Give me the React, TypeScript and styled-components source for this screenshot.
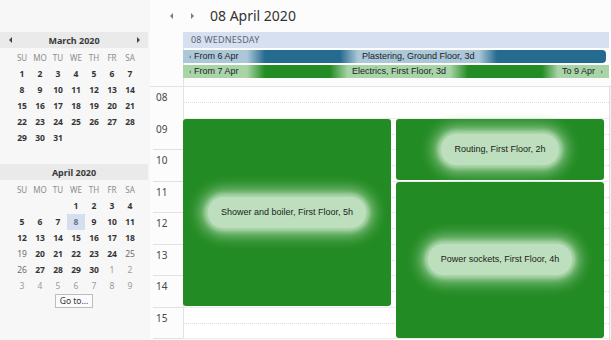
import React from 'react';
import styled, { createGlobalStyle } from 'styled-components';

const UI = `"Noto Sans", "Open Sans", sans-serif`;
const EV = `"Liberation Sans", Arial, sans-serif`;

const Global = createGlobalStyle`
  html, body { margin: 0; padding: 0; background: #fcfcfc; }
  body { width: 611px; height: 340px; overflow: hidden; }
  *, *::before, *::after { box-sizing: border-box; }
`;

const Root = styled.div`
  display: flex;
  width: 611px;
  height: 340px;
  overflow: hidden;
  font-family: ${UI};
`;

/* ---------- sidebar ---------- */
const Sidebar = styled.aside`
  width: 150px;
  flex: none;
  background: #f6f7f6;
  padding-top: 32px;
  display: flex;
  flex-direction: column;
`;

const MonthBlock = styled.section`
  width: 148px;
  & + & { margin-top: 2px; }
`;

const MonthHeader = styled.div`
  height: 16px;
  display: grid;
  grid-template-columns: 20px 1fr 20px;
  align-items: center;
  background: #e9eae9;
  font-size: 9px;
  font-weight: 700;
  color: #3a3a3a;
  text-align: center;
`;

const Tri = styled.span<{ $dir: 'left' | 'right'; $color?: string; $size?: number }>`
  display: inline-block;
  width: 0;
  height: 0;
  border-top: ${p => p.$size ?? 3}px solid transparent;
  border-bottom: ${p => p.$size ?? 3}px solid transparent;
  ${p => p.$dir === 'left'
    ? `border-right: ${p.$size ?? 3}px solid ${p.$color ?? '#444'};`
    : `border-left: ${p.$size ?? 3}px solid ${p.$color ?? '#444'};`}
  justify-self: center;
`;

const DowRow = styled.div`
  display: grid;
  grid-template-columns: repeat(7, 18px);
  height: 18px;
  padding-left: 13px;
  align-items: center;
  font-size: 8px;
  color: #8c8c8c;
  text-align: center;
`;

const DaysGrid = styled.div`
  display: grid;
  grid-template-columns: repeat(7, 18px);
  grid-auto-rows: 16px;
  padding-left: 13px;
`;

type Kind = 'bold' | 'plain' | 'other' | 'selected' | 'empty';

const DayCell = styled.span<{ $kind: Kind }>`
  display: block;
  text-align: center;
  line-height: 16px;
  font-size: 8.5px;
  font-weight: ${p => (p.$kind === 'bold' || p.$kind === 'selected' ? 700 : 400)};
  color: ${p =>
    p.$kind === 'bold' ? '#343434'
    : p.$kind === 'plain' ? '#6e6e6e'
    : p.$kind === 'selected' ? '#6b7482'
    : '#9c9c9c'};
  background: ${p => (p.$kind === 'selected' ? '#d5dff0' : 'transparent')};
`;

const Footer = styled.div`
  width: 148px;
  display: flex;
  justify-content: center;
`;

const GoTo = styled.button`
  width: 38px;
  height: 14px;
  padding: 0;
  border: 1px solid #bdbdbd;
  background: #fbfbfb;
  font-family: ${UI};
  font-size: 8.5px;
  line-height: 12px;
  color: #333;
`;

/* ---------- main ---------- */
const Main = styled.main`
  flex: 1;
  min-width: 0;
  display: flex;
  flex-direction: column;
  background: #fcfcfc;
`;

const TopBar = styled.header`
  height: 32px;
  flex: none;
  display: flex;
  align-items: center;
  padding-left: 20px;
`;

const NavGap = styled.span<{ $w: number }>`
  display: inline-block;
  width: ${p => p.$w}px;
`;

const Title = styled.h1`
  margin: 0;
  font-size: 14px;
  font-weight: 400;
  line-height: 1;
  color: #333;
`;

const AllDay = styled.div`
  height: 55px;
  flex: none;
  display: grid;
  grid-template-columns: 33px 426px 2px;
  border-bottom: 1px solid #e3e3e3;
`;

const AllDayColumn = styled.div`
  grid-column: 2;
  display: flex;
  flex-direction: column;
  gap: 2px;
  box-shadow: inset 1px 0 #e2e2e2;
`;

const DayHeader = styled.div`
  height: 16px;
  background: #d6e0f1;
  padding-left: 8px;
  font-size: 9px;
  line-height: 16px;
  letter-spacing: 0.2px;
  color: #5b6570;
`;

const Banner = styled.div<{ $color: string; $rounded?: boolean }>`
  height: 13px;
  display: flex;
  align-items: stretch;
  background: ${p => p.$color};
  border-radius: ${p => (p.$rounded ? '0 4px 4px 0' : '0')};
  margin-right: ${p => (p.$rounded ? '3px' : '0')};
  font-family: ${EV};
  font-size: 9px;
  line-height: 13px;
  color: #1b2327;
  white-space: nowrap;
  overflow: hidden;
`;

const TagStart = styled.div<{ $light: string }>`
  width: 82px;
  display: flex;
  align-items: center;
  gap: 3px;
  padding-left: 6px;
  background: linear-gradient(to right, ${p => p.$light} 0, ${p => p.$light} 78%, transparent 100%);
`;

const TagMid = styled.div<{ $light: string; $offset: number }>`
  margin-left: ${p => p.$offset}px;
  padding: 0 22px;
  background: linear-gradient(to right, transparent 0, ${p => p.$light} 18px, ${p => p.$light} calc(100% - 18px), transparent 100%);
`;

const TagEnd = styled.div<{ $light: string }>`
  margin-left: auto;
  display: flex;
  align-items: center;
  gap: 6px;
  padding: 0 6px 0 20px;
  background: linear-gradient(to right, transparent 0, ${p => p.$light} 16px);
`;

const Schedule = styled.div`
  flex: 1;
  display: grid;
  grid-template-columns: 33px 426px 2px;
  align-items: start;
`;

const TimeColumn = styled.div`
  display: flex;
  flex-direction: column;
`;

const TimeSlot = styled.div<{ $line: boolean }>`
  height: 31.5px;
  margin-left: 3px;
  padding: 4px 0 0 3px;
  font-size: 10px;
  line-height: 12px;
  color: #454545;
  border-bottom: 1px solid ${p => (p.$line ? '#e1e1e1' : 'transparent')};
`;

const DayArea = styled.div`
  display: grid;
  grid-template-columns: 1fr 1fr;
  grid-template-rows: repeat(8, 31.5px);
  column-gap: 5px;
  padding-right: 5px;
  background: #fff;
  box-shadow: inset 1px 0 #e2e2e2;
`;

const GridSlot = styled.div<{ $row: number }>`
  grid-column: 1 / -1;
  grid-row: ${p => p.$row};
  margin-right: -5px;
  position: relative;
  border-bottom: 1px solid #ececec;
  &::after {
    content: '';
    position: absolute;
    left: 1px;
    right: 0;
    top: 15px;
    border-top: 1px dotted #dcdcdc;
  }
`;

const ScrollEdge = styled.div`
  align-self: stretch;
  border-left: 1px solid #dedede;
  background: #f4f4f4;
`;

const Event = styled.div<{ $col: number; $rows: string; $gap: number }>`
  grid-column: ${p => p.$col};
  grid-row: ${p => p.$rows};
  margin-bottom: ${p => p.$gap}px;
  background: #238b23;
  border-radius: 3px;
  display: flex;
  align-items: center;
  justify-content: center;
  z-index: 1;
`;

const EventLabel = styled.span`
  padding: 10px 13px;
  border-radius: 20px;
  background: #bddfbd;
  box-shadow: 0 0 4px 3px #b0d8b0, 0 0 14px 8px #8fc68f;
  font-family: ${EV};
  font-size: 9px;
  line-height: 11px;
  color: #1c1c1c;
  white-space: nowrap;
`;

/* ---------- data ---------- */
type Day = { label: string; kind: Kind };

const march: Day[] = [
  ...Array.from({ length: 31 }, (_, i) => ({ label: String(i + 1), kind: 'bold' as Kind })),
  ...Array.from({ length: 11 }, () => ({ label: '', kind: 'empty' as Kind })),
];

const plainApril = [19, 25, 26];
const april: Day[] = [
  ...Array.from({ length: 3 }, () => ({ label: '', kind: 'empty' as Kind })),
  ...Array.from({ length: 30 }, (_, i) => {
    const d = i + 1;
    const kind: Kind = d === 8 ? 'selected' : plainApril.includes(d) ? 'plain' : 'bold';
    return { label: String(d), kind };
  }),
  ...Array.from({ length: 9 }, (_, i) => ({ label: String(i + 1), kind: 'other' as Kind })),
];

const DOW = ['SU', 'MO', 'TU', 'WE', 'TH', 'FR', 'SA'];
const HOURS = ['08', '09', '10', '11', '12', '13', '14', '15'];

const Month: React.FC<{ title: string; arrows?: boolean; days: Day[] }> = ({ title, arrows, days }) => (
  <MonthBlock>
    <MonthHeader>
      {arrows ? <Tri $dir="left" /> : <span />}
      <span>{title}</span>
      {arrows ? <Tri $dir="right" /> : <span />}
    </MonthHeader>
    <DowRow>
      {DOW.map(d => <span key={d}>{d}</span>)}
    </DowRow>
    <DaysGrid>
      {days.map((d, i) => <DayCell key={i} $kind={d.kind}>{d.label}</DayCell>)}
    </DaysGrid>
  </MonthBlock>
);

const PL_BLUE = '#256b8f';
const PL_LIGHT = '#abc7d8';
const EL_GREEN = '#248c24';
const EL_LIGHT = '#a9d4a7';

export default function App() {
  return (
    <Root>
      <Global />
      <Sidebar>
        <Month title="March 2020" arrows days={march} />
        <Month title="April 2020" days={april} />
        <Footer>
          <GoTo type="button">Go to...</GoTo>
        </Footer>
      </Sidebar>
      <Main>
        <TopBar>
          <Tri $dir="left" $color="#7a7a7a" />
          <NavGap $w={18} />
          <Tri $dir="right" $color="#7a7a7a" />
          <NavGap $w={16} />
          <Title>08 April 2020</Title>
        </TopBar>
        <AllDay>
          <AllDayColumn>
            <DayHeader>08 WEDNESDAY</DayHeader>
            <Banner $color={PL_BLUE} $rounded>
              <TagStart $light={PL_LIGHT}>
                <Tri $dir="left" $color="#6d8592" $size={2.5} />
                <span>From 6 Apr</span>
              </TagStart>
              <TagMid $light={PL_LIGHT} $offset={75}>Plastering, Ground Floor, 3d</TagMid>
            </Banner>
            <Banner $color={EL_GREEN}>
              <TagStart $light={EL_LIGHT}>
                <Tri $dir="left" $color="#6f8f6f" $size={2.5} />
                <span>From 7 Apr</span>
              </TagStart>
              <TagMid $light={EL_LIGHT} $offset={65}>Electrics, First Floor, 3d</TagMid>
              <TagEnd $light={EL_LIGHT}>
                <span>To 9 Apr</span>
                <Tri $dir="right" $color="#6f8f6f" $size={2.5} />
              </TagEnd>
            </Banner>
          </AllDayColumn>
        </AllDay>
        <Schedule>
          <TimeColumn>
            {HOURS.map((h, i) => (
              <TimeSlot key={h} $line={i !== 0}>{h}</TimeSlot>
            ))}
          </TimeColumn>
          <DayArea>
            {HOURS.map((h, i) => <GridSlot key={h} $row={i + 1} />)}
            <Event $col={1} $rows="2 / 8" $gap={1.5}>
              <EventLabel>Shower and boiler, First Floor, 5h</EventLabel>
            </Event>
            <Event $col={2} $rows="2 / 4" $gap={1.5}>
              <EventLabel>Routing, First Floor, 2h</EventLabel>
            </Event>
            <Event $col={2} $rows="4 / 9" $gap={1}>
              <EventLabel>Power sockets, First Floor, 4h</EventLabel>
            </Event>
          </DayArea>
          <ScrollEdge />
        </Schedule>
      </Main>
    </Root>
  );
}
